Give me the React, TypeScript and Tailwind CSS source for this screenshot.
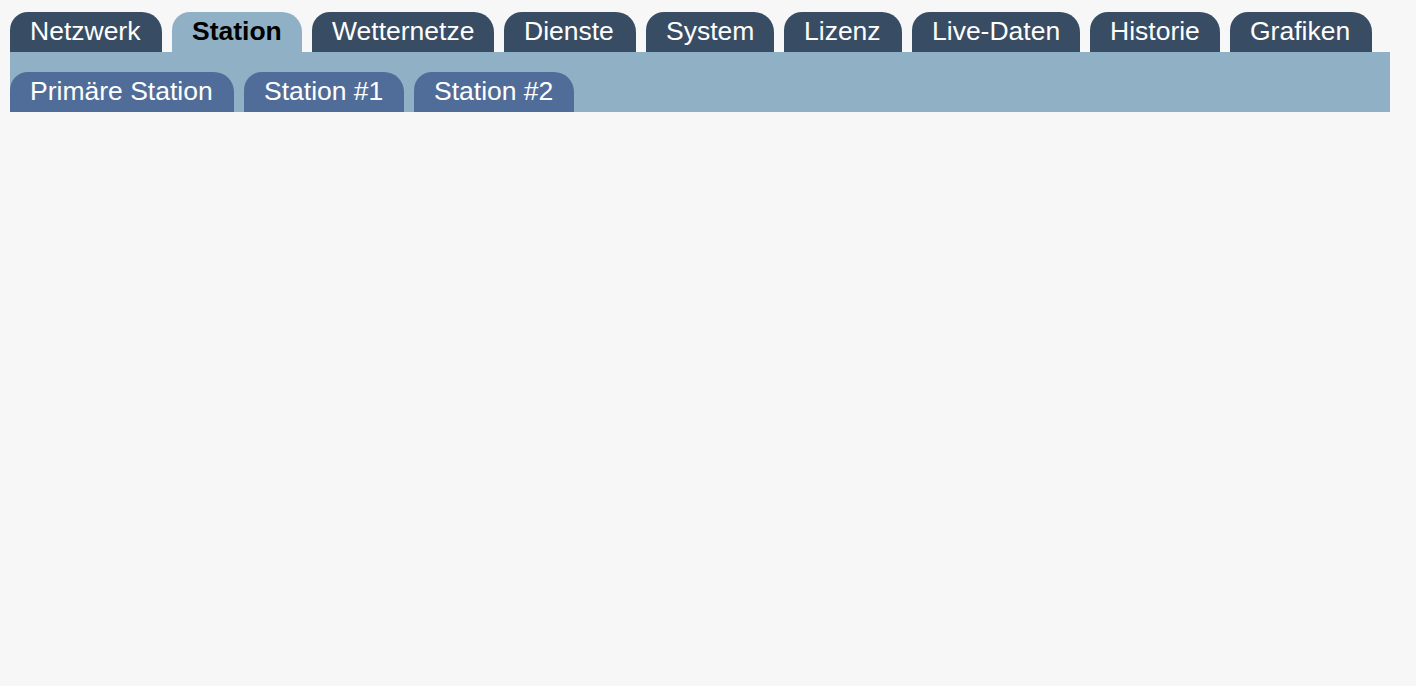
import React from 'react';

const mainTabs = [
  { label: 'Netzwerk', w: 'w-[152px]' },
  { label: 'Station', w: 'w-[130px]', active: true },
  { label: 'Wetternetze', w: 'w-[182px]' },
  { label: 'Dienste', w: 'w-[132px]' },
  { label: 'System', w: 'w-[128px]' },
  { label: 'Lizenz', w: 'w-[118px]' },
  { label: 'Live-Daten', w: 'w-[168px]' },
  { label: 'Historie', w: 'w-[130px]' },
  { label: 'Grafiken', w: 'w-[142px]' },
];

const subTabs = [
  { label: 'Primäre Station', w: 'w-[224px]' },
  { label: 'Station #1', w: 'w-[160px]' },
  { label: 'Station #2', w: 'w-[160px]' },
];

export default function App() {
  return (
    <div
      className="min-h-[686px] w-full bg-[#f7f7f7] pt-3 pl-[10px]"
      style={{ fontFamily: '"Liberation Sans", Arial, sans-serif' }}
    >
      {/* main tab row */}
      <div className="flex gap-[10px]">
        {mainTabs.map(t => (
          <div
            key={t.label}
            className={`${t.w} h-10 flex items-center pl-5 pb-[2px] whitespace-nowrap rounded-tl-[18px] rounded-tr-[20px] text-[26.5px] leading-none ${
              t.active ? 'bg-[#90b1c5] text-black font-bold' : 'bg-[#384d64] text-white'
            }`}
          >
            {t.label}
          </div>
        ))}
      </div>

      {/* sub tab bar */}
      <div className="w-[1380px] h-[60px] bg-[#90b1c5] flex items-end gap-[10px]">
        {subTabs.map(t => (
          <div
            key={t.label}
            className={`${t.w} h-10 flex items-center pl-5 pb-[2px] whitespace-nowrap rounded-tl-[18px] rounded-tr-[20px] bg-[#506d99] text-white text-[26.5px] leading-none`}
          >
            {t.label}
          </div>
        ))}
      </div>
    </div>
  );
}
